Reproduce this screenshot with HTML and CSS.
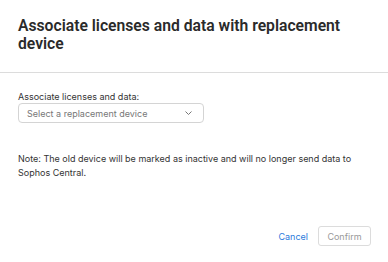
FILE: index.html
```html
<!DOCTYPE html>
<html lang="en">
<head>
    <meta charset="UTF-8">
    <title>Associate licenses</title>
    <link rel="stylesheet" href="styles.css">
</head>
<body>
    <div class="dialog">
        <div class="dialog-header">
            <h2 class="dialog-title">Associate licenses and data with replacement device</h2>
        </div>
        <div class="dialog-body">
            <label class="field-label">Associate licenses and data:</label>
            <div class="select">
                <span class="select-placeholder">Select a replacement device</span>
                <svg class="chevron" width="7" height="4" viewBox="0 0 7 4"><path d="M0.5 0.5l3 3 3-3" fill="none" stroke="#777" stroke-width="1"/></svg>
            </div>
            <p class="note">Note: The old device will be marked as inactive and will no longer send data to Sophos Central.</p>
        </div>
        <div class="dialog-footer">
            <a class="link-btn">Cancel</a>
            <button class="btn" disabled>Confirm</button>
        </div>
    </div>
</body>
</html>
```

FILE: styles.css
```css
body {
    margin: 0;
    font-family: Inter, "Noto Sans", sans-serif;
    background: #fff;
    color: #2b2b2b;
}

.dialog {
    width: 388px;
    height: 262px;
    display: flex;
    flex-direction: column;
}

.dialog-header {
    padding: 17px 18px 0;
    height: 55px;
    border-bottom: 1px solid #dcdcdc;
}

.dialog-title {
    margin: 0;
    font-family: Roboto, Inter, sans-serif;
    font-size: 15.7px;
    font-weight: 600;
    line-height: 18px;
    color: #2a2a2a;
}

.dialog-body {
    padding: 18px 18px 0;
    flex: 1;
}

.field-label {
    display: block;
    font-size: 9px;
    line-height: 12px;
    color: #333;
}

.select {
    width: 186px;
    height: 20px;
    box-sizing: border-box;
    border: 1px solid #d4d4d4;
    border-radius: 4px;
    display: flex;
    align-items: center;
    justify-content: space-between;
    padding: 0 11px 0 8px;
}

.select-placeholder {
    font-size: 9px;
    color: #777;
}

.note {
    margin: 29px 0 0;
    font-size: 9px;
    line-height: 13.5px;
    color: #333;
}

.dialog-footer {
    display: flex;
    justify-content: flex-end;
    align-items: center;
    gap: 10px;
    padding: 0 17px 16px;
}

.link-btn {
    font-size: 9px;
    color: #2b7bdc;
}

.btn {
    font-family: inherit;
    font-size: 9px;
    color: #999;
    background: #fff;
    border: 1px solid #dcdcdc;
    border-radius: 3px;
    height: 20px;
    width: 53px;
    padding: 0;
}
```
